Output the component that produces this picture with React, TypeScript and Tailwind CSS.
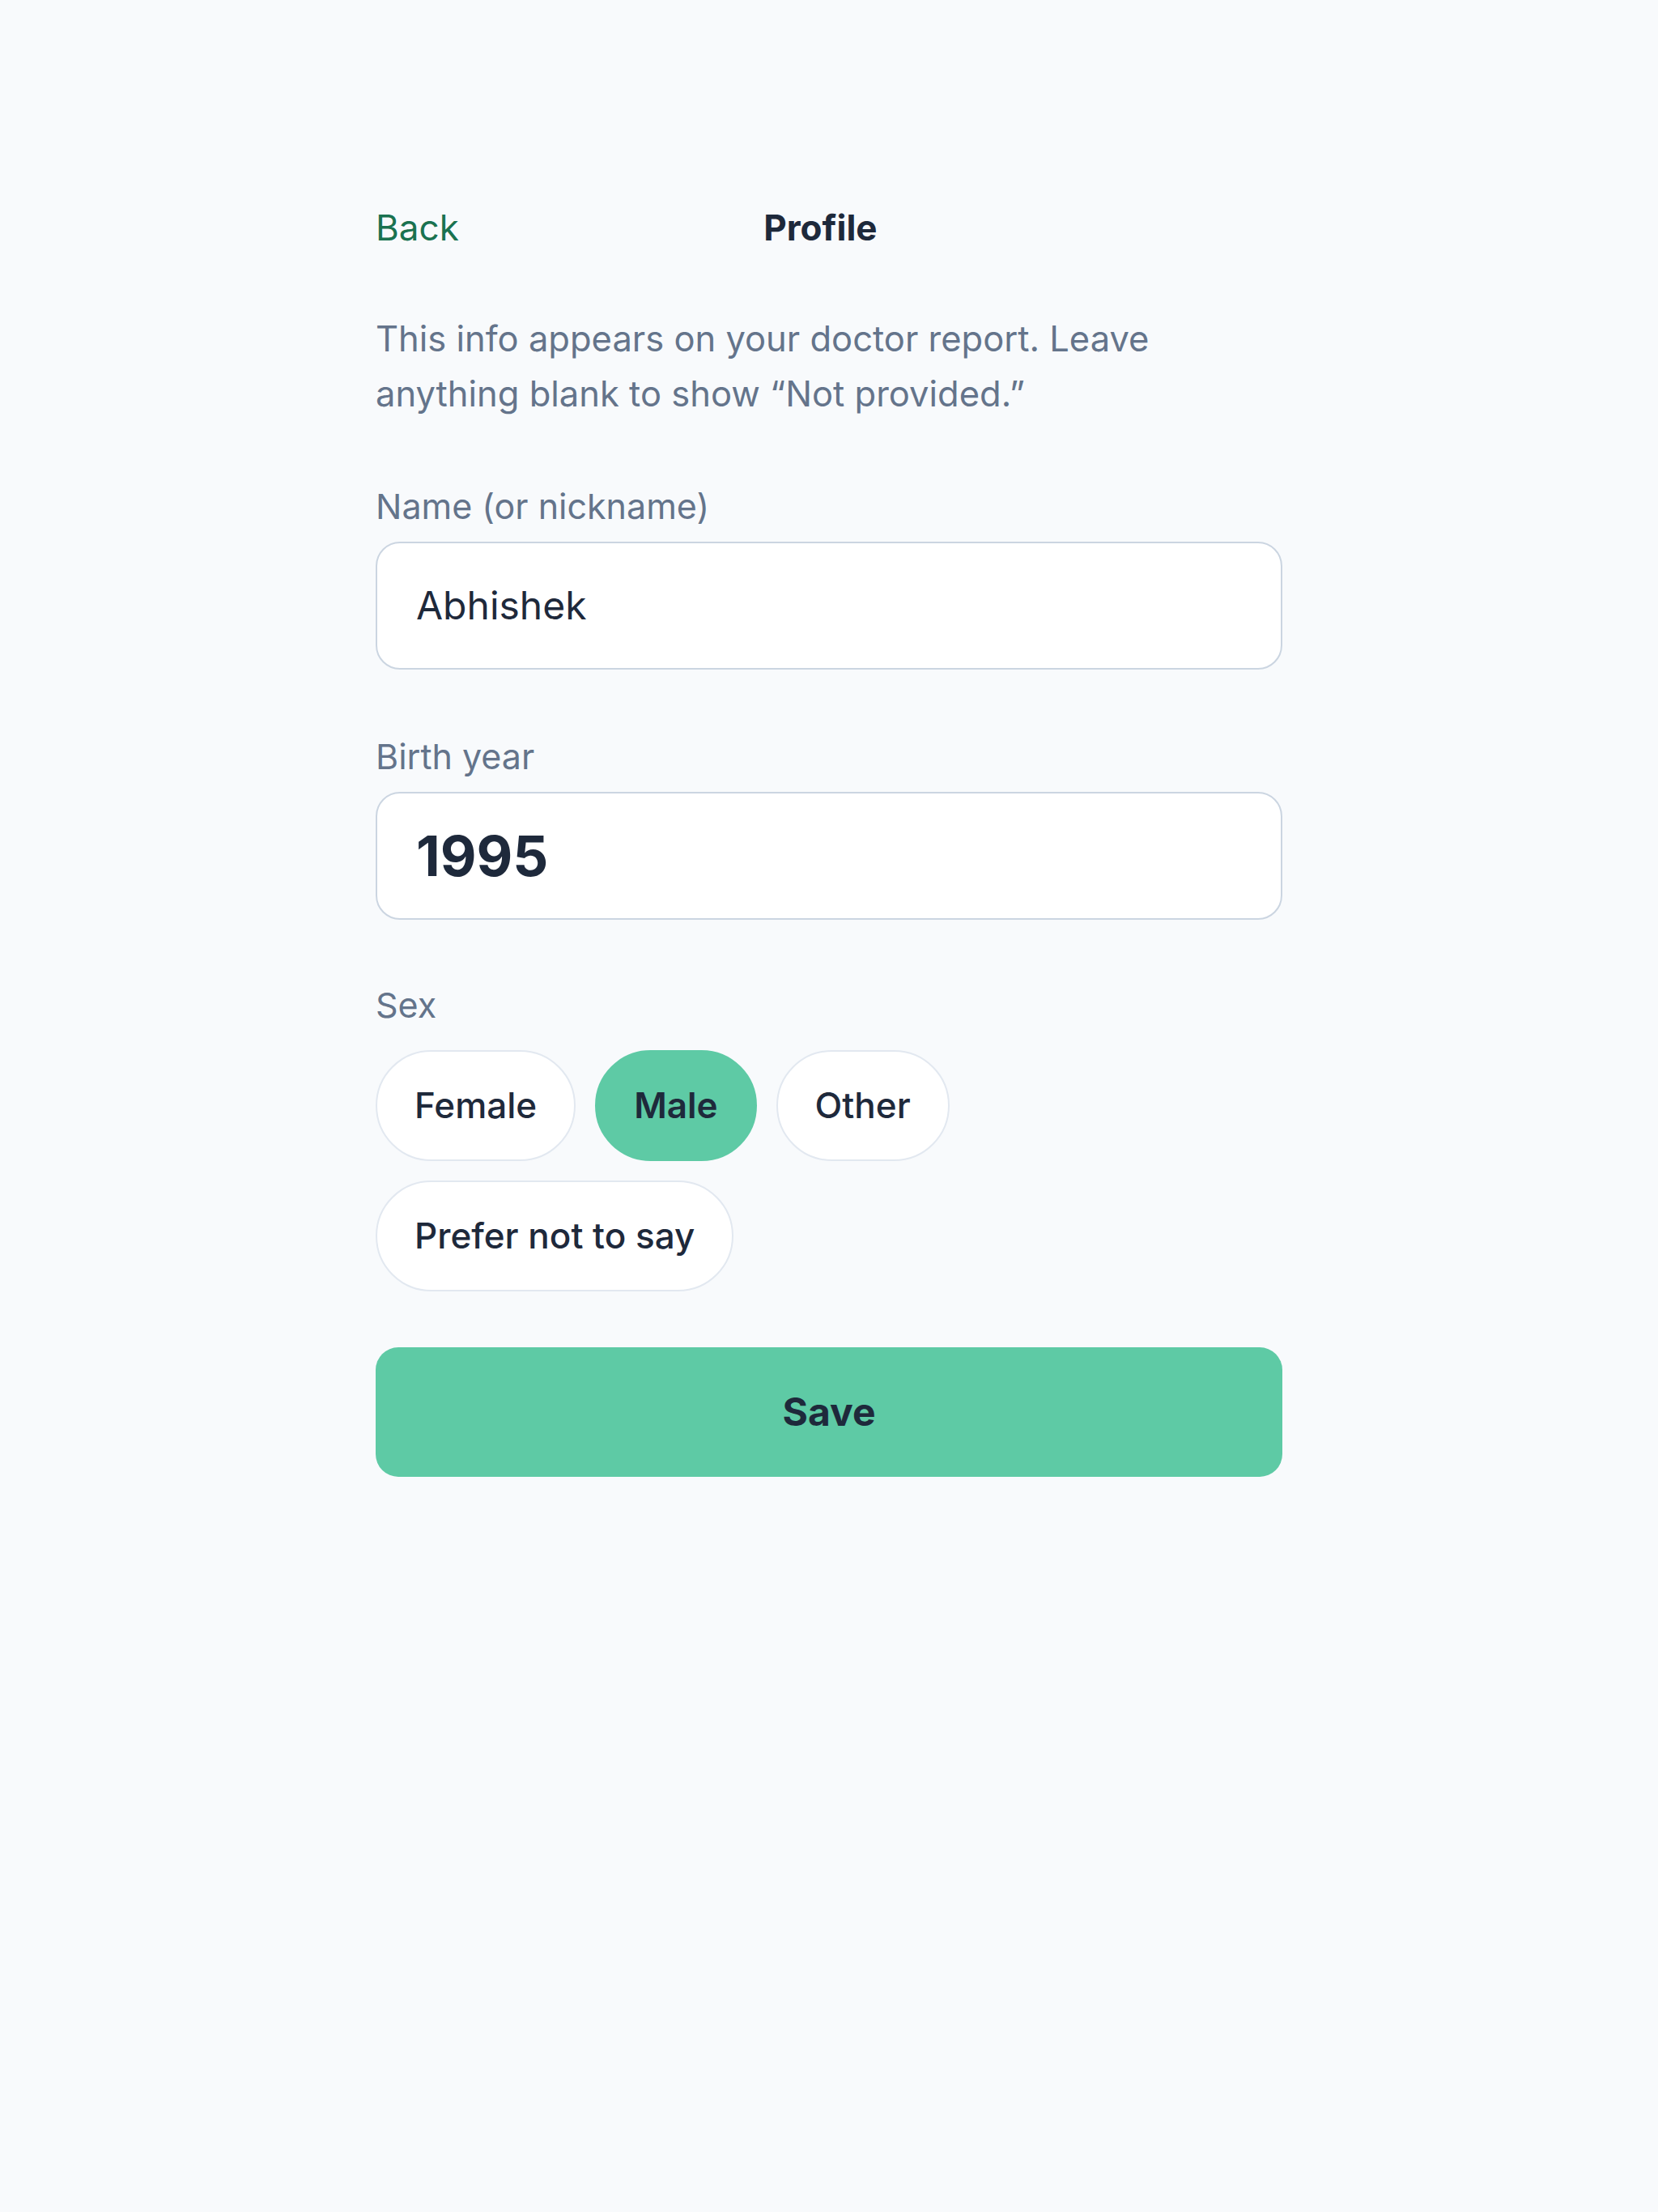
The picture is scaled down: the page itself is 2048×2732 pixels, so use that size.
import { useState } from "react";

const SEX_OPTIONS = ["Female", "Male", "Other", "Prefer not to say"];

export default function App() {
  const [name, setName] = useState("Abhishek");
  const [year, setYear] = useState("1995");
  const [sex, setSex] = useState("Male");

  return (
    <div className="min-h-[2732px] bg-[#f8fafc] font-['Inter',sans-serif] text-[#1e293b]">
      <div className="mx-auto w-[1120px] pt-[255px]">
        <div className="flex items-center">
          <button className="text-[44px] leading-[1.2] text-[#1a7250]" type="button">
            Back
          </button>
          <h1 className="flex-1 text-center text-[44px] font-bold leading-[1.2] text-[#1e293b]">Profile</h1>
          <div className="w-[124px]" />
        </div>

        <p className="mt-[76px] max-w-[1010px] text-[43.5px] leading-[68px] text-[#64748b]">
          This info appears on your doctor report. Leave anything blank to show “Not provided.”
        </p>

        <label className="mt-[80px] block text-[43px] leading-[50px] text-[#64748b]">Name (or nickname)</label>
        <input
          className="mt-[19px] block h-[158px] w-full rounded-[30px] border-2 border-[#cbd5e1] bg-white px-[48px] text-[48px] text-[#1e293b] outline-none"
          onChange={(event) => setName(event.target.value)}
          value={name}
        />

        <label className="mt-[82px] block text-[43px] leading-[50px] text-[#64748b]">Birth year</label>
        <input
          className="mt-[19px] block h-[158px] w-full rounded-[30px] border-2 border-[#cbd5e1] bg-white px-[48px] text-[69px] font-bold text-[#1e293b] outline-none"
          onChange={(event) => setYear(event.target.value)}
          value={year}
        />

        <p className="mt-[80px] text-[43px] leading-[50px] text-[#64748b]">Sex</p>
        <div className="mt-[31px] flex w-[760px] flex-wrap gap-[24px]">
          {SEX_OPTIONS.map((option) => {
            const active = option === sex;
            return (
              <button
                className={
                  active
                    ? "flex h-[137px] items-center rounded-full border-2 border-[#5ecaa5] bg-[#5ecaa5] px-[46px] text-[44px] font-semibold text-[#1e293b]"
                    : "flex h-[137px] items-center rounded-full border-2 border-[#e2e8f0] bg-white px-[46px] text-[44px] font-medium text-[#1e293b]"
                }
                key={option}
                onClick={() => setSex(option)}
                type="button"
              >
                {option}
              </button>
            );
          })}
        </div>

        <button
          className="mt-[69px] flex h-[160px] w-full items-center justify-center rounded-[28px] bg-[#5ecaa5] text-[48px] font-bold text-[#1e293b]"
          type="button"
        >
          Save
        </button>
      </div>
    </div>
  );
}
